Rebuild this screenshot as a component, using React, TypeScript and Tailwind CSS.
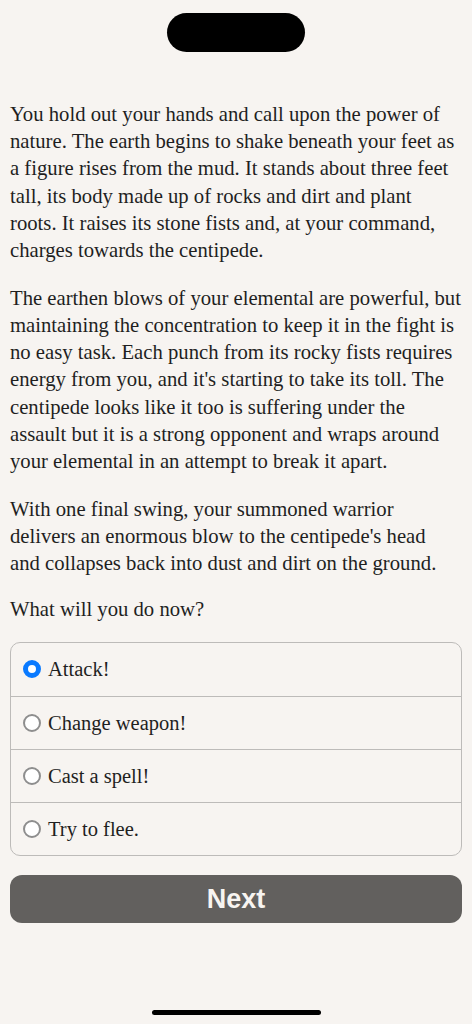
import React from "react";

const paragraphs: string[][] = [
  [
    "You hold out your hands and call upon the power of",
    "nature. The earth begins to shake beneath your feet as",
    "a figure rises from the mud. It stands about three feet",
    "tall, its body made up of rocks and dirt and plant",
    "roots. It raises its stone fists and, at your command,",
    "charges towards the centipede.",
  ],
  [
    "The earthen blows of your elemental are powerful, but",
    "maintaining the concentration to keep it in the fight is",
    "no easy task. Each punch from its rocky fists requires",
    "energy from you, and it's starting to take its toll. The",
    "centipede looks like it too is suffering under the",
    "assault but it is a strong opponent and wraps around",
    "your elemental in an attempt to break it apart.",
  ],
  [
    "With one final swing, your summoned warrior",
    "delivers an enormous blow to the centipede's head",
    "and collapses back into dust and dirt on the ground.",
  ],
];

const options = ["Attack!", "Change weapon!", "Cast a spell!", "Try to flee."];

export default function App() {
  const [sel, setSel] = React.useState(0);
  return (
    <div
      className="w-[472px] h-[1024px] bg-[#f7f4f1] text-[#1f1f1f] flex flex-col overflow-hidden"
      style={{ fontFamily: '"Liberation Serif", serif' }}
    >
      <div className="flex justify-center pt-[13px]">
        <div className="w-[138px] h-[39px] rounded-full bg-black" />
      </div>
      <div className="px-[10px] pt-[49px] text-[20.7px] leading-[27.2px]">
        {paragraphs.map((p, i) => (
          <p key={i} className="mb-[20.5px]">
            {p.map((l, j) => (
              <span key={j} className="block whitespace-nowrap">
                {l}
              </span>
            ))}
          </p>
        ))}
        <p className="mt-[-2px]">What will you do now?</p>
      </div>
      <div className="mx-[10px] mt-[19px] border border-[#bdbbb9] rounded-[10px] overflow-hidden">
        {options.map((o, i) => (
          <button
            key={o}
            onClick={() => setSel(i)}
            className={`w-full h-[53px] flex items-center gap-[7px] pl-[12px] text-left text-[20.5px] ${
              i > 0 ? "border-t border-[#bdbbb9]" : ""
            }`}
          >
            {sel === i ? (
              <span className="w-[18px] h-[18px] rounded-full border-[5px] border-[#0a7aff] bg-white shrink-0" />
            ) : (
              <span className="w-[18px] h-[18px] rounded-full border-2 border-[#8e8e8e] bg-white shrink-0" />
            )}
            <span>{o}</span>
          </button>
        ))}
      </div>
      <button
        className="mx-[10px] mt-[19px] h-[48px] rounded-[12px] bg-[#62605e] text-[#f7f4f1] text-[27px] font-bold"
        style={{ fontFamily: '"Liberation Sans", Arial, sans-serif' }}
      >
        Next
      </button>
      <div className="flex-1" />
      <div className="flex justify-center pb-[9px]">
        <div className="w-[169px] h-[5px] rounded-full bg-black" />
      </div>
    </div>
  );
}
